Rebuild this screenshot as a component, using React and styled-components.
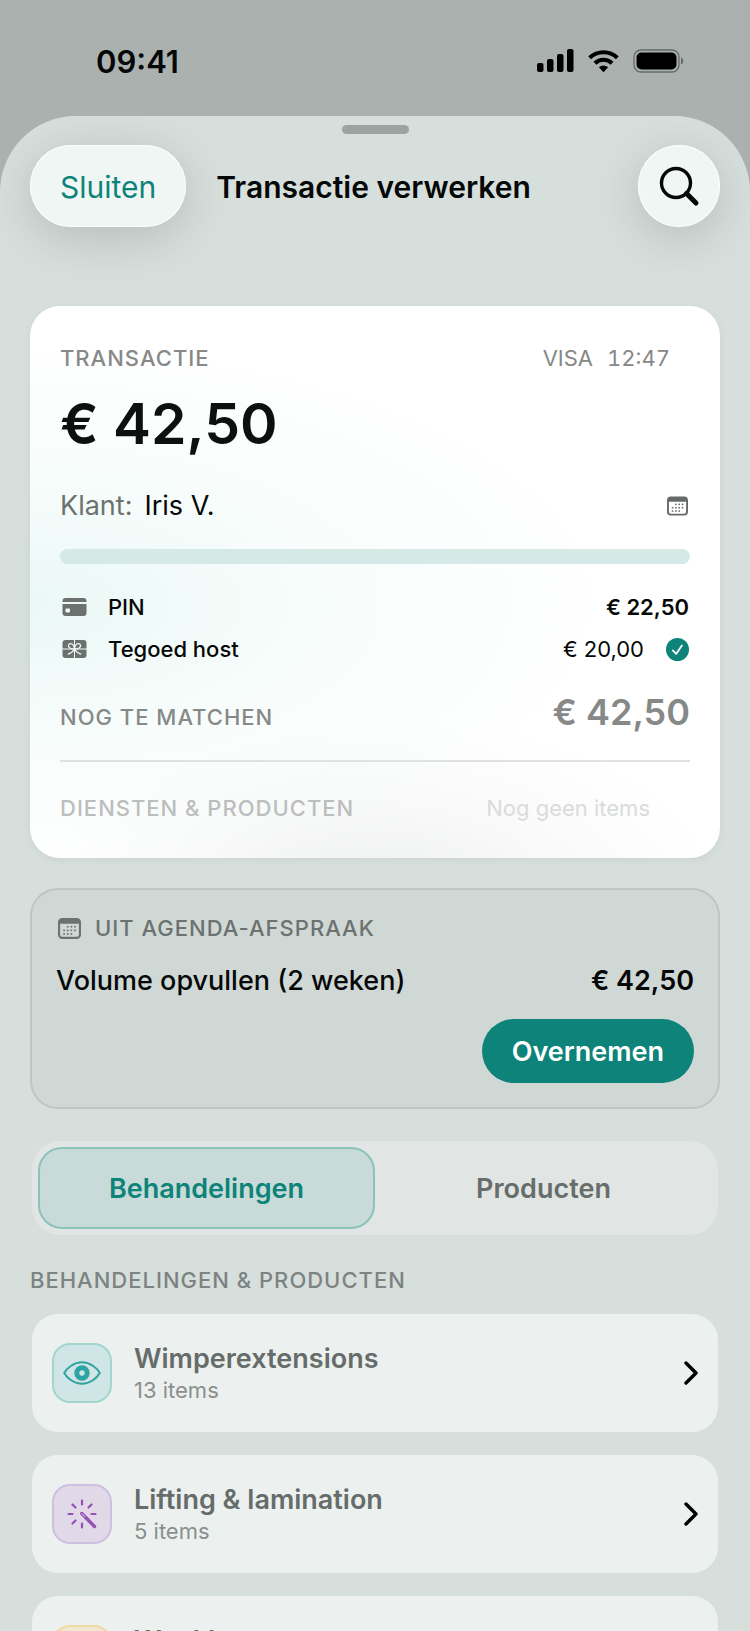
import React, { useState } from 'react';
import styled, { createGlobalStyle } from 'styled-components';

const CalendarIcon = () => (
  <svg viewBox="0 0 22 20" fill="currentColor" aria-hidden="true">
    <rect x="1" y="1" width="20" height="18" rx="3" fill="none" stroke="currentColor" strokeWidth="2" />
    <path d="M1 5.500V3.500A2.500 2.500 0 0 1 3.500 1h15A2.500 2.500 0 0 1 21 3.500V5.500z" />
    {[[9, 8], [12.500, 8], [16, 8], [5.500, 11.500], [9, 11.500], [12.500, 11.500], [16, 11.500], [5.500, 15], [9, 15], [12.500, 15]].map(([x, y]) => (
      <rect key={`${x}-${y}`} x={x - 0.5} y={y - 0.5} width="1.600" height="1.600" />
    ))}
  </svg>
);

const CardIcon = () => (
  <svg viewBox="0 0 24 18" fill="currentColor" aria-hidden="true">
    <path d="M0 4V3a3 3 0 0 1 3-3h18a3 3 0 0 1 3 3v1z" />
    <path fillRule="evenodd" d="M0 6h24v9a3 3 0 0 1-3 3H3a3 3 0 0 1-3-3zM4 10.500a1 1 0 0 0-1 1V13.500a1 1 0 0 0 1 1h2.500a1 1 0 0 0 1-1v-2a1 1 0 0 0-1-1z" />
  </svg>
);

const GiftIcon = () => (
  <svg viewBox="0 0 24 18" aria-hidden="true">
    <rect width="24" height="18" rx="3" fill="currentColor" />
    <g fill="none" stroke="#f2faf8" strokeWidth="1.300" strokeLinecap="round">
      <path d="M12 0v18M0 9h24" strokeWidth="1" />
      <path d="M12 9C8 9 5.500 7.500 6 5.200 6.500 3.200 9.500 3 10.700 5 11.500 6.200 12 7.500 12 9c0-1.500.500-2.800 1.300-4 1.200-2 4.200-1.800 4.700.2.500 2.300-2 3.800-6 3.800zM12 9c-1.500 2.500-3.500 4.300-6 5M12 9c1.500 2.500 3.500 4.300 6 5" />
    </g>
  </svg>
);

const EyeIcon = () => (
  <svg width="38" height="24" viewBox="0 0 38 24" fill="none" stroke="currentColor" aria-hidden="true">
    <path d="M1.200 12C4 7 11 1.200 19 1.200S34 7 36.800 12C34 17 27 22.800 19 22.800S4 17 1.200 12z" strokeWidth="2" strokeLinejoin="round" />
    <circle cx="19" cy="12" r="5.200" strokeWidth="5" />
  </svg>
);

const WandIcon = () => (
  <svg width="30" height="30" viewBox="0 0 30 30" fill="none" stroke="currentColor" strokeWidth="2.200" strokeLinecap="round" aria-hidden="true">
    <path d="M15 1.500v4M15 24.500v4M1.500 15h4M24.500 15h4M5.500 5.500l3 3M24.500 5.500l-3 3M5.500 24.500l3-3" />
    <path d="M14.800 14.500L27.500 27.500" strokeWidth="3.400" />
    <path d="M15 14.800l2.800 2.800" strokeWidth="1" stroke="#e6dcec" />
  </svg>
);

const SearchIcon = () => (
  <svg width="42" height="42" viewBox="0 0 42 42" fill="none" stroke="#050807" strokeLinecap="round" aria-hidden="true">
    <circle cx="18" cy="18" r="14.500" strokeWidth="3.400" />
    <path d="M28.500 28.500L38 38" strokeWidth="5" />
  </svg>
);

const SignalIcon = () => (
  <svg width="37" height="24" viewBox="0 0 37 24" aria-hidden="true">
    <rect x="0" y="14" width="6.500" height="9" rx="2" />
    <rect x="10" y="10" width="6.500" height="13" rx="2" />
    <rect x="20" y="5" width="6.500" height="18" rx="2" />
    <rect x="30" y="0" width="6.500" height="23" rx="2" />
  </svg>
);

const WifiIcon = () => (
  <svg width="31" height="24" viewBox="0 0 32 24" fill="none" stroke="#000" strokeWidth="4.200" aria-hidden="true">
    <path d="M1.700 8.700a20.500 20.500 0 0 1 28.600 0" />
    <path d="M7.200 14.300a12.600 12.600 0 0 1 17.600 0" />
    <path d="M16 23.500l-4.800-5a7 7 0 0 1 9.600 0z" fill="#000" stroke="none" />
  </svg>
);

const BatteryIcon = () => (
  <svg width="51" height="24" viewBox="0 0 51 24" aria-hidden="true">
    <rect x="1" y="1" width="45" height="22" rx="7" fill="none" stroke="#666b69" strokeWidth="1.300" />
    <rect x="3.500" y="3.500" width="40" height="17" rx="5" />
    <path d="M48 8.500c3 1 3 6 0 7z" fill="#666b69" />
  </svg>
);

const payments = [
  { id: 'pin', label: 'PIN', amount: '€ 22,50', icon: <CardIcon />, strong: true },
  { id: 'host', label: 'Tegoed host', amount: '€ 20,00', icon: <GiftIcon />, checked: true },
];

const categories = [
  { name: 'Wimperextensions', count: '13 items', icon: <EyeIcon />, color: '#2fa3a3', fill: '#d0e6e6', line: '#a3d5cf' },
  { name: 'Lifting & lamination', count: '5 items', icon: <WandIcon />, color: '#9650b6', fill: '#e1d9e8', line: '#cfc0e1' },
  { name: 'Wenkbrauwen', count: '8 items', icon: null, color: '#d9a53a', fill: '#efe7d2', line: '#efd9a6' },
];

const App = () => {
  const [tab, setTab] = useState('Behandelingen');

  return (
    <Screen>
      <GlobalStyle />
      <StatusBar>
        <time>09:41</time>
        <StatusIcons>
          <SignalIcon />
          <WifiIcon />
          <BatteryIcon />
        </StatusIcons>
      </StatusBar>

      <Sheet>
        <Grabber />
        <Header>
          <CloseButton type="button">Sluiten</CloseButton>
          <h1>Transactie verwerken</h1>
          <SearchButton type="button" aria-label="Zoeken">
            <SearchIcon />
          </SearchButton>
        </Header>

        <TransactionCard>
          <CardTop>
            <Caption>Transactie</Caption>
            <Meta>
              <span>VISA</span>
              <span>12:47</span>
            </Meta>
          </CardTop>
          <Total>€ 42,50</Total>
          <Client>
            <span>Klant:</span>
            <strong>Iris V.</strong>
            <SmallIcon>
              <CalendarIcon />
            </SmallIcon>
          </Client>
          <Progress />
          <Payments>
            {payments.map(({ id, label, amount, icon, strong, checked }) => (
              <Payment key={id}>
                <PaymentIcon>{icon}</PaymentIcon>
                <span>{label}</span>
                <Amount $strong={strong}>{amount}</Amount>
                {checked && (
                  <Check viewBox="0 0 22 22" aria-hidden="true">
                    <circle cx="11" cy="11" r="11" fill="#0d8379" />
                    <path d="M6.500 11.800l3.200 3.400 5.500-8" fill="none" stroke="#fff" strokeWidth="1.700" strokeLinecap="round" strokeLinejoin="round" />
                  </Check>
                )}
              </Payment>
            ))}
          </Payments>
          <Remaining>
            <Caption>Nog te matchen</Caption>
            <strong>€ 42,50</strong>
          </Remaining>
          <Items>
            <Caption $faded>Diensten &amp; producten</Caption>
            <span>Nog geen items</span>
          </Items>
        </TransactionCard>

        <Appointment>
          <AppointmentTitle>
            <CalendarIcon />
            <Caption $dark>Uit agenda-afspraak</Caption>
          </AppointmentTitle>
          <AppointmentLine>
            <span>Volume opvullen (2 weken)</span>
            <strong>€ 42,50</strong>
          </AppointmentLine>
          <TakeOver type="button">Overnemen</TakeOver>
        </Appointment>

        <Tabs role="tablist">
          {['Behandelingen', 'Producten'].map((name) => (
            <Tab key={name} type="button" role="tab" aria-selected={tab === name} $active={tab === name} onClick={() => setTab(name)}>
              {name}
            </Tab>
          ))}
        </Tabs>

        <ListTitle>Behandelingen &amp; producten</ListTitle>
        <List>
          {categories.map(({ name, count, icon, color, fill, line }) => (
            <li key={name}>
              <Category type="button">
                <Tile $color={color} $fill={fill} $line={line}>{icon}</Tile>
                <CategoryText>
                  <strong>{name}</strong>
                  <span>{count}</span>
                </CategoryText>
                <svg width="14" height="24" viewBox="0 0 14 24" fill="none" stroke="#000" strokeWidth="3.400" strokeLinecap="round" strokeLinejoin="round" aria-hidden="true">
                  <path d="M2 2l10 10L2 22" />
                </svg>
              </Category>
            </li>
          ))}
        </List>
      </Sheet>
    </Screen>
  );
};

const GlobalStyle = createGlobalStyle`
  * {
    box-sizing: border-box;
    margin: 0;
    padding: 0;
  }
  body {
    font-family: Inter, "Liberation Sans", sans-serif;
    color: #050807;
    background: #abb1af;
  }
  button {
    font: inherit;
    color: inherit;
    border: none;
    cursor: pointer;
  }
  svg {
    display: block;
    flex: none;
  }
`;

const Screen = styled.div`
  height: 100vh;
  display: flex;
  flex-direction: column;
  overflow: hidden;
  background: #abb1af;
`;

const StatusBar = styled.div`
  flex: none;
  height: 116px;
  padding: 6px 66px 0 96px;
  display: flex;
  align-items: center;
  justify-content: space-between;
  font-size: 31px;
  font-weight: 600;
`;

const StatusIcons = styled.div`
  display: flex;
  gap: 14px;
`;

const Sheet = styled.main`
  flex: 1;
  min-height: 0;
  overflow: hidden;
  display: flex;
  flex-direction: column;
  padding: 9px 30px 0;
  border-radius: 76px 76px 0 0;
  background: #d7dfdc;
  > * {
    flex: none;
  }
`;

const Grabber = styled.div`
  width: 67px;
  height: 9px;
  border-radius: 5px;
  background: #9ca3a1;
  align-self: center;
`;

const Header = styled.header`
  margin-top: 11px;
  display: flex;
  align-items: center;
  h1 {
    flex: 1;
    margin-left: 30px;
    padding-top: 2px;
    font-size: 30px;
    font-weight: 600;
    white-space: nowrap;
  }
`;

const CloseButton = styled.button`
  height: 82px;
  padding: 2px 30px 0;
  border-radius: 41px;
  font-size: 30px;
  color: #0d8379;
  background: #eff6f4;
  box-shadow: 0 10px 48px rgba(0, 0, 0, 0.16), inset 0 0 0 1px #fafefd;
`;

const SearchButton = styled.button`
  width: 82px;
  height: 82px;
  border-radius: 50%;
  display: grid;
  place-items: center;
  background: #eff6f4;
  box-shadow: 0 10px 48px rgba(0, 0, 0, 0.16), inset 0 0 0 1px #fafefd;
`;

const TransactionCard = styled.section`
  margin-top: 79px;
  padding: 38px 30px 36px;
  border-radius: 30px;
  background:
    radial-gradient(ellipse 84% 48% at 0% 54%, #ebf8f6 0, rgba(244, 252, 250, 0.7) 50%, rgba(255, 255, 255, 0) 100%),
    radial-gradient(ellipse 50% 34% at 50% 108%, #edeeee 0, rgba(246, 247, 247, 0.7) 55%, rgba(255, 255, 255, 0) 100%),
    #fff;
  box-shadow: 0 2px 8px rgba(0, 0, 0, 0.05);
`;

const CardTop = styled.div`
  display: flex;
  align-items: center;
  justify-content: space-between;
  padding-right: 20px;
`;

const Caption = styled.h2`
  font-size: 22px;
  line-height: 28px;
  font-weight: 500;
  letter-spacing: 1px;
  text-transform: uppercase;
  color: ${({ $faded, $dark }) => ($faded ? '#bcbebd' : $dark ? '#6b7270' : '#868988')};
`;

const Meta = styled.div`
  display: flex;
  gap: 14px;
  font-size: 22px;
  font-variant-numeric: tabular-nums;
  color: #858887;
`;

const Total = styled.p`
  margin-top: 16px;
  font-size: 57px;
  line-height: 72px;
  font-weight: 600;
  color: #0d100f;
`;

const Client = styled.p`
  margin-top: 29px;
  display: flex;
  align-items: center;
  gap: 12px;
  font-size: 27px;
  line-height: 34px;
  span {
    color: #6b7270;
  }
  strong {
    flex: 1;
    font-weight: 400;
  }
`;

const SmallIcon = styled.i`
  color: #666b69;
  margin-right: 2px;
  svg {
    width: 21px;
    height: 20px;
  }
`;

const Progress = styled.div`
  margin-top: 26px;
  height: 15px;
  border-radius: 8px;
  background: #d5eae6;
`;

const Payments = styled.ul`
  margin-top: 29px;
  display: grid;
  gap: 14px;
  list-style: none;
`;

const Payment = styled.li`
  display: flex;
  align-items: center;
  padding-right: 1px;
  font-size: 22px;
  line-height: 28px;
  font-weight: 500;
`;

const PaymentIcon = styled.i`
  margin: 0 21px 0 2px;
  color: #6a716f;
  svg {
    width: 25px;
    height: 18px;
  }
`;

const Amount = styled.span`
  margin-left: auto;
  font-weight: ${({ $strong }) => ($strong ? 600 : 400)};
`;

const Check = styled.svg`
  width: 23px;
  height: 23px;
  margin-left: 22px;
`;

const Remaining = styled.div`
  margin-top: 25px;
  padding-bottom: 24px;
  display: flex;
  align-items: baseline;
  justify-content: space-between;
  border-bottom: 2px solid #dfe2e1;
  strong {
    font-size: 36px;
    line-height: 48px;
    font-weight: 600;
    color: #868988;
  }
`;

const Items = styled.div`
  margin-top: 32px;
  padding-right: 40px;
  display: flex;
  justify-content: space-between;
  font-size: 22px;
  line-height: 28px;
  color: #dadbdb;
`;

const Appointment = styled.section`
  margin-top: 30px;
  padding: 24px 24px;
  display: flex;
  flex-direction: column;
  border: 2px solid #bec5c2;
  border-radius: 28px;
  background: #d0d8d5;
`;

const AppointmentTitle = styled.div`
  display: flex;
  align-items: center;
  gap: 14px;
  padding-left: 2px;
  color: #6b7270;
  svg {
    width: 23px;
    height: 21px;
  }
`;

const AppointmentLine = styled.p`
  margin-top: 22px;
  display: flex;
  justify-content: space-between;
  font-size: 27px;
  line-height: 34px;
  font-weight: 500;
  strong {
    font-weight: 600;
  }
`;

const TakeOver = styled.button`
  margin-top: 21px;
  align-self: flex-end;
  height: 64px;
  padding: 0 30px;
  border-radius: 32px;
  font-size: 27px;
  font-weight: 600;
  color: #fff;
  background: #0d8379;
`;

const Tabs = styled.div`
  margin: 32px 2px 0;
  padding: 6px;
  display: grid;
  grid-template-columns: 1fr 1fr;
  border-radius: 28px;
  background: #e1e6e4;
`;

const Tab = styled.button`
  height: 82px;
  border: 2px solid ${({ $active }) => ($active ? '#8cc3b8' : 'transparent')};
  border-radius: 24px;
  font-size: 27px;
  font-weight: 600;
  color: ${({ $active }) => ($active ? '#0d8379' : '#666d6a')};
  background: ${({ $active }) => ($active ? '#c8dbd8' : 'none')};
`;

const ListTitle = styled(Caption)`
  margin-top: 31px;
  color: #7c8381;
`;

const List = styled.ul`
  margin: 20px 2px 0;
  display: grid;
  gap: 23px;
  list-style: none;
`;

const Category = styled.button`
  width: 100%;
  height: 118px;
  padding: 0 20px;
  display: flex;
  align-items: center;
  border-radius: 26px;
  text-align: left;
  background: #ecf1ef;
`;

const Tile = styled.span`
  width: 60px;
  height: 60px;
  display: grid;
  place-items: center;
  border: 2px solid ${({ $line }) => $line};
  border-radius: 18px;
  color: ${({ $color }) => $color};
  background: ${({ $fill }) => $fill};
`;

const CategoryText = styled.span`
  flex: 1;
  margin-left: 22px;
  display: flex;
  flex-direction: column;
  strong {
    font-size: 27px;
    line-height: 34px;
    font-weight: 600;
    color: #666c6a;
  }
  span {
    font-size: 22px;
    line-height: 28px;
    color: #8a8f8d;
  }
`;

export default App;
